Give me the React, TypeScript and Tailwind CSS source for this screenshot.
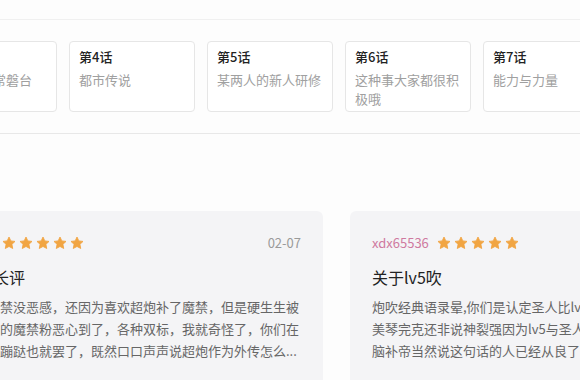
import React from "react";

const FONT = { fontFamily: '"Noto Sans CJK SC", "Noto Sans", sans-serif' };

const episodes = [
  { t: "第3话", s: "欢迎来到常磐台" },
  { t: "第4话", s: "都市传说" },
  { t: "第5话", s: "某两人的新人研修" },
  { t: "第6话", s: "这种事大家都很积极哦" },
  { t: "第7话", s: "能力与力量" },
];

function Star() {
  return (
    <svg width="14" height="14" viewBox="0 0 24 24" className="shrink-0">
      <path
        d="M12 1.8l3.1 6.6 7.2.9-5.3 5 1.4 7.1L12 17.9l-6.4 3.5 1.4-7.1-5.3-5 7.2-.9z"
        fill="#f1a543"
        stroke="#f1a543"
        strokeWidth="1.5"
        strokeLinejoin="round"
      />
    </svg>
  );
}

function Stars() {
  return (
    <div className="flex gap-[3px] items-center">
      <Star />
      <Star />
      <Star />
      <Star />
      <Star />
    </div>
  );
}

function Review({
  user,
  date,
  title,
  lines,
  width,
}: {
  user: string;
  date?: string;
  title: string;
  lines: string[];
  width: string;
}) {
  return (
    <div className={`${width} h-[200px] shrink-0 rounded-md bg-[#f4f4f6] px-[22px] pt-[22px] overflow-hidden`}>
      <div className="flex items-center justify-between h-[20px]">
        <div className="flex items-center gap-[8px]">
          <span className="text-[13px] leading-[20px] text-[#cf7aa0]">{user}</span>
          <Stars />
        </div>
        {date && <span className="text-[13px] leading-[20px] text-[#9a9a9a]">{date}</span>}
      </div>
      <div className="mt-[12px] text-[16px] leading-[24px] text-[#222]">{title}</div>
      <div className="mt-[7px] text-[13px] leading-[22px] text-[#666]">
        {lines.map((l, i) => (
          <div key={i} className="whitespace-nowrap">
            {l}
          </div>
        ))}
      </div>
    </div>
  );
}

export default function App() {
  return (
    <div className="w-[580px] h-[380px] overflow-hidden bg-[#fdfdfd]" style={FONT}>
      <div className="h-[20px] border-b border-[#f0f0f0]" />
      <div className="mt-[21px] flex gap-[12px] ml-[-69px]">
        {episodes.map((e) => (
          <div
            key={e.t}
            className="w-[126px] h-[71px] shrink-0 rounded-[4px] border border-[#e6e6e6] bg-white px-[9px] pt-[5px]"
          >
            <div className="text-[13px] leading-[20px] font-medium text-[#222]">{e.t}</div>
            <div className="mt-[3px] text-[13px] leading-[19px] text-[#a0a0a0]">{e.s}</div>
          </div>
        ))}
      </div>
      <div className="mt-[21px] h-[1px] bg-[#e8e8e8]" />
      <div className="mt-[77px] flex gap-[27px] ml-[-61px]">
        <Review
          width="w-[384px]"
          user="ksm2"
          date="02-07"
          title="超炮长评"
          lines={[
            "我对魔禁没恶感，还因为喜欢超炮补了魔禁，但是硬生生被",
            "被那些的魔禁粉恶心到了，各种双标，我就奇怪了，你们在",
            "在魔禁蹦跶也就罢了，既然口口声声说超炮作为外传怎么...",
          ]}
        />
        <Review
          width="w-[390px]"
          user="xdx65536"
          title="关于lv5吹"
          lines={[
            "炮吹经典语录晕,你们是认定圣人比lv5强",
            "美琴完克还非说神裂强因为lv5与圣人",
            "脑补帝当然说这句话的人已经从良了",
          ]}
        />
      </div>
    </div>
  );
}
